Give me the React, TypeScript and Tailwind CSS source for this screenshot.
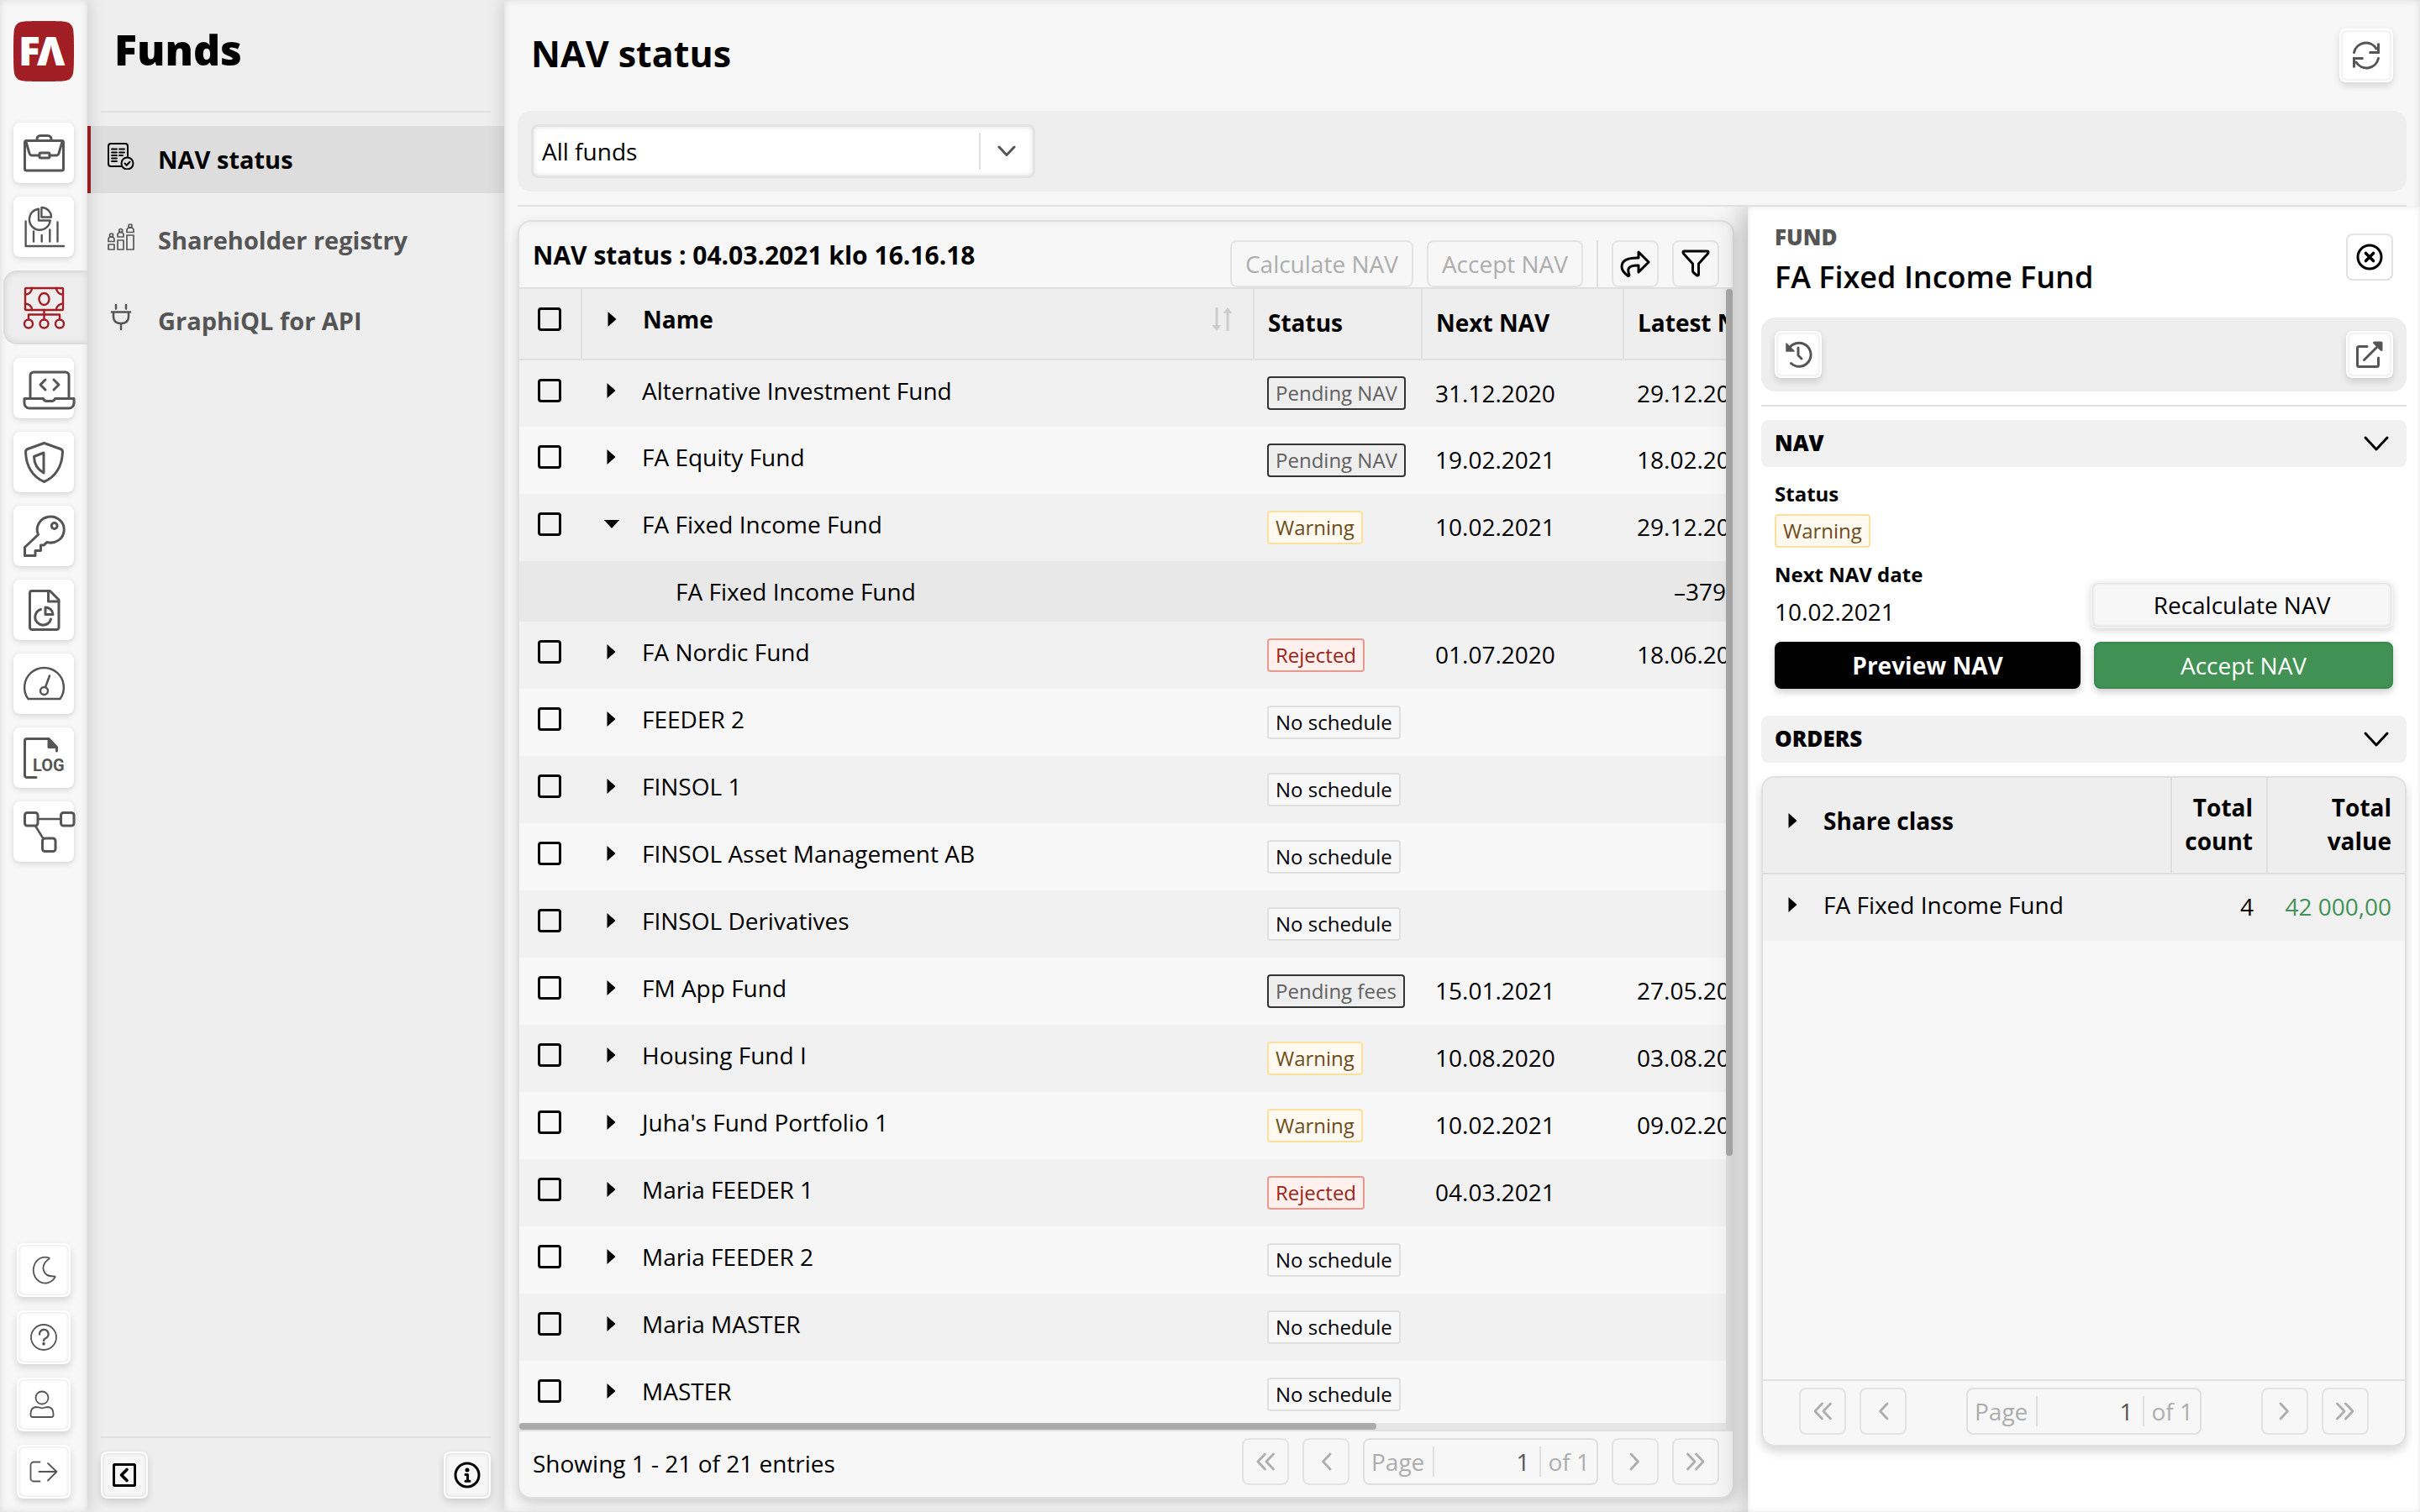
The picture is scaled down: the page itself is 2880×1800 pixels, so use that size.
import type { ReactNode } from "react";

const line = {
  fill: "none",
  stroke: "currentColor",
  strokeWidth: 3,
  strokeLinecap: "round",
  strokeLinejoin: "round",
} as const;

function Glyph({ box, className, width = 3, children }: { box: string; className: string; width?: number; children: ReactNode }) {
  return (
    <svg viewBox={box} className={className} {...line} strokeWidth={width} aria-hidden="true">
      {children}
    </svg>
  );
}

const modules: { label: string; icon: ReactNode; active?: boolean }[] = [
  {
    label: "Portfolios",
    icon: (
      <>
        <rect x="13.5" y="21.5" width="46" height="35.5" rx="2" />
        <path d="M28 21v-1.500a4 4 0 0 1 4-4h9a4 4 0 0 1 4 4V21M15 23l4 13.500q1 2.500 3 2.500h8.500M58 23l-4 13.500q-1 2.500-3 2.500H43" />
        <rect x="31" y="36" width="12" height="6" rx="1.500" />
      </>
    ),
  },
  {
    label: "Analytics",
    icon: (
      <g strokeWidth="2.400">
        <path d="M14.600 29.500v29.500H60M24 41.500v12M33.700 46v7.500M43.300 39.500v14M52.500 30.500v23" />
        <path d="M30 14.800A12.500 12.500 0 1 0 43.800 28.500H30Z" />
        <path d="M33.400 13v11.500H45A11.500 11.500 0 0 0 33.400 13Z" />
      </g>
    ),
  },
  {
    label: "Funds",
    active: true,
    icon: (
      <g strokeWidth="2.400">
        <rect x="14" y="13" width="45" height="26" rx="1" />
        <ellipse cx="36.500" cy="26" rx="6" ry="7" />
        <path d="M22 13a8 7.500 0 0 1-8 7.500M51 13a8 7.500 0 0 0 8 7.500M22 39a8 7.500 0 0 0-8-7.500M51 39a8 7.500 0 0 1 8-7.500" />
        <path d="M36.500 39v11M18 49v-4.500h37V49" />
        <circle cx="18" cy="55.500" r="5" />
        <circle cx="36.500" cy="55.500" r="5" />
        <circle cx="55" cy="55.500" r="5" />
      </g>
    ),
  },
  {
    label: "Developer",
    icon: (
      <>
        <path d="M20 47V21a4 4 0 0 1 4-4h38a4 4 0 0 1 4 4v26" />
        <path d="M13 48.500h22.500q1 3 4 3h6q3 0 4-3H72V54a6 6 0 0 1-6 6H19a6 6 0 0 1-6-6Z" />
        <path d="M38 26l-6 6 6 6M48 26l6 6-6 6" />
      </>
    ),
  },
  {
    label: "Compliance",
    icon: (
      <>
        <path d="M36.500 13.500 56 20.500q2.500 1 2.500 3.500C58 41 50 54 36.500 59.500 23 54 15 41 14.500 24q0-2.500 2.500-3.500Z" />
        <path d="M36 25v24C29 45 24.500 38 24.500 29.500Z" />
      </>
    ),
  },
  {
    label: "Access",
    icon: (
      <>
        <path d="M29.500 34.500 13.500 49.500V59.500H26V53.500H32.500V47H36L40 43.500A16 15.500 0 1 0 29.500 34.500Z" />
        <circle cx="48.700" cy="24" r="3.400" />
      </>
    ),
  },
  {
    label: "Reports",
    icon: (
      <>
        <path d="M22 13.500h21.500L54 24v33a2.500 2.500 0 0 1-2.500 2.500H22a2.500 2.500 0 0 1-2.500-2.500V16a2.500 2.500 0 0 1 2.500-2.500Z" />
        <path d="M41.500 13.500V26H54" />
        <path d="M32.500 35.500A9.500 9.500 0 1 0 44.500 47" />
        <path d="M38 33v8.500h9A9 9 0 0 0 38 33Z" />
      </>
    ),
  },
  {
    label: "Dashboard",
    icon: (
      <g strokeWidth="2.500">
        <path d="M17.500 54a23.400 23.400 0 1 1 38 0Z" />
        <circle cx="36.500" cy="44.500" r="4.500" />
        <path d="M38 40l5-13.500" />
      </g>
    ),
  },
  {
    label: "Log",
    icon: (
      <>
        <path d="M27 59.500H16a2.500 2.500 0 0 1-2.500-2.500V16a2.500 2.500 0 0 1 2.500-2.500h26L51.500 23.500V28" />
        <path d="M42 14v9.500h9Z" fill="currentColor" />
        <text x="23" y="52" fontFamily="Roboto" fontSize="20" fontWeight="700" fill="currentColor" stroke="none">
          LOG
        </text>
      </>
    ),
  },
  {
    label: "Workflows",
    icon: (
      <>
        <rect x="13.500" y="13.500" width="15.500" height="15.500" rx="3" />
        <rect x="56.500" y="13.500" width="15.500" height="15.500" rx="3" />
        <rect x="34.500" y="44" width="15.500" height="15.500" rx="3" />
        <path d="M29 21h27.500M26 29l9.500 15.500" strokeWidth="2.500" />
      </>
    ),
  },
];

const userTools: { label: string; icon: ReactNode }[] = [
  { label: "Dark mode", icon: <path d="M38.500 17.500A14 15.500 0 1 0 45.500 40.500Q46 39.500 44.500 39.500C31 40 26.500 27 38.500 18.500Q39 17.700 38.500 17.500Z" /> },
  {
    label: "Help",
    icon: (
      <>
        <circle cx="32" cy="32" r="15" />
        <path d="M27 28.500a5.300 5.300 0 1 1 7.500 4.500q-2.500 1.200-2.500 3" strokeWidth="2.400" />
        <path d="M32 39.500v.4" strokeWidth="3.500" />
      </>
    ),
  },
  {
    label: "Profile",
    icon: (
      <>
        <circle cx="30" cy="24" r="7.500" />
        <path d="M22.500 35q3 0 7.500 1.500Q34.500 35 37.500 35q6 1 6 8v1.500q0 2.500-2.500 2.500H19q-2.500 0-2.500-2.500V43q0-7 6-8Z" />
      </>
    ),
  },
  { label: "Log out", icon: <path d="M27.500 20.500H20A3.500 3.500 0 0 0 16.500 24V40A3.500 3.500 0 0 0 20 43.500H27.500M26.500 32H47M37 22L47.500 32 37 42.500" /> },
];

const views: { label: string; icon: ReactNode; active?: boolean }[] = [
  {
    label: "NAV status",
    active: true,
    icon: (
      <>
        <path d="M17 28H4a3 3 0 0 1-3-3V4a3 3 0 0 1 3-3h17a3 3 0 0 1 3 3v12" />
        <path d="M5 7.500h6M14 7.500h6M5 11.500h6M14 11.500h6M5 15h6M14 15h4M5 18.500h6M5 22h6" strokeWidth="1.800" />
        <circle cx="23.500" cy="24.500" r="7" />
        <path d="M20.500 24.500l2.200 2.200 3.800-4" />
      </>
    ),
  },
  {
    label: "Shareholder registry",
    icon: (
      <g strokeWidth="1.700">
        <rect x="1" y="25" width="7" height="6" />
        <rect x="12" y="20" width="7" height="11" />
        <rect x="23" y="14" width="8" height="17" />
        <circle cx="4.500" cy="14" r="2" />
        <circle cx="15.700" cy="8.500" r="2" />
        <circle cx="27" cy="3" r="2" />
        <path d="M1 21.500v-2.500q0-3 3.500-3t3.500 3v2.500ZM12 16v-2.500q0-3 3.500-3t3.500 3V16ZM23 10.500V8q0-3 4-3t4 3v2.500Z" />
      </g>
    ),
  },
  {
    label: "GraphiQL for API",
    icon: (
      <g strokeWidth="2.500">
        <path d="M10 1v4.500M22 1v4.500M5 9.500h22M7 10v5q0 8 9 8t9-8v-5M16 23v7" />
      </g>
    ),
  },
];

type Status = "Pending NAV" | "Pending fees" | "Warning" | "Rejected" | "No schedule";

interface Fund {
  name: string;
  status?: Status;
  next?: string;
  latest?: string;
  open?: boolean;
  child?: boolean;
  shaded?: boolean;
}

const funds: Fund[] = [
  { name: "Alternative Investment Fund", status: "Pending NAV", next: "31.12.2020", latest: "29.12.2020", shaded: true },
  { name: "FA Equity Fund", status: "Pending NAV", next: "19.02.2021", latest: "18.02.2021" },
  { name: "FA Fixed Income Fund", status: "Warning", next: "10.02.2021", latest: "29.12.2020", open: true, shaded: true },
  { name: "FA Fixed Income Fund", latest: "–379", child: true },
  { name: "FA Nordic Fund", status: "Rejected", next: "01.07.2020", latest: "18.06.2020", shaded: true },
  { name: "FEEDER 2", status: "No schedule" },
  { name: "FINSOL 1", status: "No schedule", shaded: true },
  { name: "FINSOL Asset Management AB", status: "No schedule" },
  { name: "FINSOL Derivatives", status: "No schedule", shaded: true },
  { name: "FM App Fund", status: "Pending fees", next: "15.01.2021", latest: "27.05.2020" },
  { name: "Housing Fund I", status: "Warning", next: "10.08.2020", latest: "03.08.2020", shaded: true },
  { name: "Juha's Fund Portfolio 1", status: "Warning", next: "10.02.2021", latest: "09.02.2021" },
  { name: "Maria FEEDER 1", status: "Rejected", next: "04.03.2021", shaded: true },
  { name: "Maria FEEDER 2", status: "No schedule" },
  { name: "Maria MASTER", status: "No schedule", shaded: true },
  { name: "MASTER", status: "No schedule" },
];

const badgeTone: Record<Status, string> = {
  "Pending NAV": "border-[#333333] bg-[#eeeeee] text-[#606060]",
  "Pending fees": "border-[#333333] bg-[#eeeeee] text-[#606060]",
  Warning: "border-[#fbdf9f] bg-[#fff9f0] text-[#6b4d1a]",
  Rejected: "border-[#e89a8e] bg-[#ffefed] text-[#982416]",
  "No schedule": "border-[#e0e0e0] bg-[#f7f7f7] text-black",
};

function Badge({ status }: { status: Status }) {
  return (
    <span className={`inline-flex h-10 items-center rounded border-2 px-2 align-middle text-[24px] whitespace-nowrap ${badgeTone[status]}`}>
      {status}
    </span>
  );
}

function Check({ label }: { label: string }) {
  return <input type="checkbox" aria-label={label} className="block size-7 appearance-none rounded border-3 border-black" />;
}

function Expander({ label, open = false }: { label: string; open?: boolean }) {
  return (
    <button type="button" aria-label={label} aria-expanded={open} className="size-5 shrink-0">
      <svg viewBox="0 0 20 20" className="size-5" aria-hidden="true">
        <path d={open ? "M1 5H19L10 15Z" : "M4.500 1V19L14.500 10Z"} fill="black" />
      </svg>
    </button>
  );
}

function RaisedButton({ label, className, children }: { label: string; className: string; children: ReactNode }) {
  return (
    <button
      type="button"
      aria-label={label}
      className={`flex shrink-0 items-center justify-center rounded-lg border-2 border-white shadow-[0_4px_8px_rgba(0,0,0,0.14),inset_0_0_4px_rgba(0,0,0,0.14)] ${className}`}
    >
      {children}
    </button>
  );
}

function OutlineButton({ label, className = "", children }: { label: string; className?: string; children: ReactNode }) {
  return (
    <button
      type="button"
      aria-label={label}
      className={`flex size-14 shrink-0 items-center justify-center rounded-lg border-2 border-[#e3e3e3] ${className}`}
    >
      {children}
    </button>
  );
}

const steps = {
  first: "M14.500 5 6 14l8.500 9M24.500 5 16 14l8.500 9",
  previous: "M20 5 11.500 14 20 23",
  next: "M10 5l8.500 9L10 23",
  last: "M5.500 5 14 14l-8.500 9M15.500 5 24 14l-8.500 9",
};

function StepButton({ label, d }: { label: string; d: string }) {
  return (
    <OutlineButton label={label} className="text-[#adadad]">
      <Glyph box="0 0 30 28" className="h-7 w-[30px]" width={2.8}>
        <path d={d} />
      </Glyph>
    </OutlineButton>
  );
}

function PageBox({ id }: { id: string }) {
  return (
    <div className="flex h-14 w-[280px] items-center rounded-lg border-2 border-[#e0e0e0] text-[#adadad]">
      <label htmlFor={id} className="pr-2.5 pl-2">
        Page
      </label>
      <input id={id} defaultValue="1" className="h-9 w-0 grow border-x-2 border-[#e0e0e0] bg-transparent px-3 text-right text-[#555555] outline-none" />
      <span className="px-2 whitespace-nowrap">of 1</span>
    </div>
  );
}

function Rail() {
  return (
    <nav aria-label="Modules" className="relative z-10 flex w-[104px] shrink-0 flex-col items-center bg-[#f7f7f7] pb-4 shadow-[0_0_20px_rgba(0,0,0,0.16),inset_0_0_8px_rgba(0,0,0,0.12)]">
      <svg viewBox="0 0 72 72" className="mt-[25px] size-18 shrink-0" role="img" aria-label="FA">
        <path d="M36 0C62 0 65 .5 68.500 4.500 71.500 8 72 12 72 36s-.5 28-3.500 31.500C65 71.500 62 72 36 72S7 71.500 3.500 67.500C.5 64 0 60 0 36S.5 8 3.500 4.500C7 .5 10 0 36 0Z" fill="#a01e24" />
        <text x="6" y="53" fontFamily="Open Sans" fontSize="48" fontWeight="800" fill="white">
          F
        </text>
        <text x="28" y="53" fontFamily="Open Sans" fontSize="48" fontWeight="800" fill="white">
          Λ
        </text>
      </svg>
      <ul className="mt-[49px] flex w-full flex-col gap-4">
        {modules.map((m) =>
          m.active ? (
            <li key={m.label} className="pl-1">
              <button
                type="button"
                aria-label={m.label}
                aria-current="page"
                className="flex h-22 w-full items-center rounded-l-2xl border-2 border-r-0 border-[#dcdcdc] bg-[#eeeeee] pl-2.5 text-[#a01e24] shadow-[inset_0_0_8px_rgba(0,0,0,0.1)]"
              >
                <Glyph box="0 0 72 72" className="size-18 overflow-visible">
                  {m.icon}
                </Glyph>
              </button>
            </li>
          ) : (
            <li key={m.label} className="px-4">
              <button type="button" aria-label={m.label} className="block size-18 rounded-lg bg-white text-[#555555] shadow-[0_2px_6px_rgba(0,0,0,0.15)]">
                <Glyph box="0 0 72 72" className="size-18 overflow-visible">
                  {m.icon}
                </Glyph>
              </button>
            </li>
          ),
        )}
      </ul>
      <div className="mt-auto flex flex-col gap-4">
        {userTools.map((t) => (
          <RaisedButton key={t.label} label={t.label} className="size-16 bg-white text-[#555555]">
            <Glyph box="0 0 64 64" className="size-16 shrink-0" width={1.8}>
              {t.icon}
            </Glyph>
          </RaisedButton>
        ))}
      </div>
    </nav>
  );
}

function Sidebar() {
  return (
    <aside className="flex w-[496px] shrink-0 flex-col bg-[#eeeeee]">
      <div className="mx-4 flex h-[134px] items-center border-b-2 border-[#e0e0e0] pb-3.5 pl-4">
        <h1 className="text-[50px] font-extrabold">Funds</h1>
      </div>
      <ul className="mt-4 flex flex-col gap-4">
        {views.map((v) => (
          <li key={v.label}>
            <a
              href="#"
              aria-current={v.active ? "page" : undefined}
              className={`flex h-20 items-center gap-7 border-l-4 pl-5 text-[29px] font-bold ${v.active ? "border-[#a01e24] bg-[#dddddd] text-black" : "border-transparent text-[#555555]"}`}
            >
              <Glyph box="0 0 32 32" className="mb-2 size-8" width={2}>
                {v.icon}
              </Glyph>
              {v.label}
            </a>
          </li>
        ))}
      </ul>
      <div className="mx-4 mt-auto flex justify-between border-t-2 border-[#e0e0e0] py-4">
        <RaisedButton label="Collapse menu" className="size-14 border-[#f7f7f7] bg-[#f7f7f7]">
          <Glyph box="0 0 56 56" className="size-14 shrink-0">
            <rect x="15.500" y="15.500" width="25" height="25" rx="1" />
            <path d="M31 21.500 24.500 28l6.500 6.500" strokeWidth="3.600" />
          </Glyph>
        </RaisedButton>
        <RaisedButton label="Information" className="size-14 border-[#f7f7f7] bg-[#f7f7f7]">
          <Glyph box="0 0 56 56" className="size-14 shrink-0">
            <circle cx="28" cy="28" r="14" />
            <path d="M28 22v.1" strokeWidth="5" />
            <path d="M26 27.500h2.500V35M26 35.200h5" strokeWidth="3" />
          </Glyph>
        </RaisedButton>
      </div>
    </aside>
  );
}

function FundTable() {
  return (
    <table className="w-[2034px] shrink-0 table-fixed self-start text-left">
      <colgroup>
        <col className="w-[74px]" />
        <col className="w-[800px]" />
        <col className="w-[200px]" />
        <col className="w-[240px]" />
        <col />
      </colgroup>
      <thead>
        <tr className="h-[84px] border-b-2 border-[#e0e0e0] bg-[#eeeeee]">
          <th className="border-r-2 border-[#e0e0e0] pb-3 pl-[22px]">
            <Check label="Select all funds" />
          </th>
          <th className="border-r-2 border-[#e0e0e0] pr-6 pb-3 pl-[26px]">
            <div className="flex items-center">
              <Expander label="Expand all" />
              <span className="ml-[26px]">Name</span>
              <svg viewBox="0 0 24 28" className="ml-auto h-7 w-6 text-[#cccccc]" aria-hidden="true">
                <path d="M5 0v24M18 4v24" stroke="currentColor" strokeWidth="3" />
                <path d="M-.5 21H10.500L5 28ZM12.500 7H23.500L18 0Z" fill="currentColor" />
              </svg>
            </div>
          </th>
          <th className="border-r-2 border-[#e0e0e0] pb-1 pl-4">Status</th>
          <th className="border-r-2 border-[#e0e0e0] pb-1 pl-4">Next NAV</th>
          <th className="pb-1 pl-4">Latest NAV</th>
        </tr>
      </thead>
      <tbody>
        {funds.map((f, i) =>
          f.child ? (
            <tr key={i} className="h-18 bg-[#e8e8e8]">
              <td />
              <td className="pl-[112px]">{f.name}</td>
              <td />
              <td />
              <td className="pl-15">{f.latest}</td>
            </tr>
          ) : (
            <tr key={i} className={`h-20 ${f.shaded ? "bg-[#f1f1f1]" : "bg-[#f7f7f7]"}`}>
              <td className="pb-2 pl-[22px]">
                <Check label={`Select ${f.name}`} />
              </td>
              <td className="pb-2 pl-[26px]">
                <div className="flex items-center">
                  <Expander label={`Toggle ${f.name}`} open={f.open} />
                  <span className="ml-[26px]">{f.name}</span>
                </div>
              </td>
              <td className="pb-1 pl-4">{f.status && <Badge status={f.status} />}</td>
              <td className="pb-0.5 pl-4">{f.next}</td>
              <td className="pb-0.5 pl-4">{f.latest}</td>
            </tr>
          ),
        )}
      </tbody>
    </table>
  );
}

function FundCard() {
  return (
    <section className="flex min-w-0 grow flex-col overflow-hidden rounded-2xl border-2 border-[#e0e0e0] bg-[#f7f7f7] shadow-[0_6px_14px_rgba(0,0,0,0.16)]">
      <div className="flex h-20 shrink-0 items-end gap-4 border-b-2 border-[#e0e0e0] px-4 shadow-[inset_0_4px_6px_rgba(0,0,0,0.03)]">
        <h3 className="mr-auto self-start pt-4 text-[30px] leading-12 font-bold">NAV status : 04.03.2021 klo 16.16.18</h3>
        <button type="button" disabled className="h-14 rounded-lg border-2 border-[#e3e3e3] px-4 text-[#adadad]">
          Calculate NAV
        </button>
        <button type="button" disabled className="h-14 rounded-lg border-2 border-[#e3e3e3] px-4 text-[#adadad]">
          Accept NAV
        </button>
        <span className="h-14 w-0.5 bg-[#e0e0e0]" />
        <OutlineButton label="Export">
          <Glyph box="0 0 36 34" className="h-[34px] w-9">
            <path d="M22 3l12 12-12 12v-8q-10-.5-12 4-.8 3 1 7.500-.5 1.500-1.500 1Q2 26 2 20.500 2 9.500 22 10Z" />
          </Glyph>
        </OutlineButton>
        <OutlineButton label="Filter">
          <Glyph box="0 0 34 34" className="size-[34px]">
            <path d="M3.500 2h27q1.500 0 1.500 1.500 0 .8-.6 1.400L20.500 17v12.500q0 1.500-1.300 1.500-.6 0-1.200-.5l-3.500-3q-1-.8-1-2V17L2.600 4.900Q2 4.300 2 3.500 2 2 3.500 2Z" />
          </Glyph>
        </OutlineButton>
      </div>
      <div className="flex min-h-0 grow">
        <div className="flex min-w-0 grow flex-col">
          <div className="flex min-h-0 min-w-0 grow overflow-hidden">
            <FundTable />
          </div>
          <div className="h-2 shrink-0 bg-[#e6e6e6]">
            <div className="h-full w-[71%] rounded-full bg-[#aaaaaa]" />
          </div>
        </div>
        <div className="w-2 shrink-0 bg-[#e0e0e0]">
          <div className="h-[76%] rounded-full bg-[#aaaaaa]" />
        </div>
      </div>
      <div className="flex shrink-0 items-center gap-4 border-t-2 border-[#e0e0e0] px-4 pt-2 pb-3.5">
        <span className="mr-auto pt-1">Showing 1 - 21 of 21 entries</span>
        <StepButton label="First page" d={steps.first} />
        <StepButton label="Previous page" d={steps.previous} />
        <PageBox id="fund-page" />
        <StepButton label="Next page" d={steps.next} />
        <StepButton label="Last page" d={steps.last} />
      </div>
    </section>
  );
}

function SectionBar({ title }: { title: string }) {
  return (
    <h4 className="shrink-0">
      <button type="button" aria-expanded="true" className="flex h-14 w-full items-center justify-between rounded-lg bg-[#f1f1f1] pr-5 pl-4">
        <span className="pb-0.5 text-[26px] font-extrabold">{title}</span>
        <Glyph box="0 0 32 20" className="h-5 w-8">
          <path d="M3 3l13 14L29 3" />
        </Glyph>
      </button>
    </h4>
  );
}

function Orders() {
  return (
    <section className="mt-4 mb-[78px] flex min-h-0 grow flex-col overflow-hidden rounded-2xl border-2 border-[#e0e0e0] bg-[#f7f7f7] shadow-[0_6px_12px_rgba(0,0,0,0.16)]">
      <table className="w-full table-fixed">
        <colgroup>
          <col />
          <col className="w-[114px]" />
          <col className="w-[164px]" />
        </colgroup>
        <thead>
          <tr className="h-[114px] border-b-2 border-[#e0e0e0] bg-[#eeeeee] leading-10">
            <th className="border-r-2 border-[#e0e0e0] pb-3 pl-[26px] text-left">
              <div className="flex items-center">
                <Expander label="Expand all" />
                <span className="ml-[26px]">Share class</span>
              </div>
            </th>
            <th className="border-r-2 border-[#e0e0e0] pr-4 pb-1 text-right">
              Total
              <br />
              count
            </th>
            <th className="pr-4 pb-1 text-right">
              Total
              <br />
              value
            </th>
          </tr>
        </thead>
        <tbody>
          <tr className="h-20 bg-[#f1f1f1]">
            <td className="pb-2 pl-[26px]">
              <div className="flex items-center">
                <Expander label="Toggle FA Fixed Income Fund" />
                <span className="ml-[26px]">FA Fixed Income Fund</span>
              </div>
            </td>
            <td className="pr-4 pb-1 text-right">4</td>
            <td className="pr-4 pb-1 text-right text-[#429256]">42 000,00</td>
          </tr>
        </tbody>
      </table>
      <div className="mt-auto flex shrink-0 items-center justify-around border-t-2 border-[#e0e0e0] px-2 pt-2 pb-3">
        <div className="flex gap-4">
          <StepButton label="First page" d={steps.first} />
          <StepButton label="Previous page" d={steps.previous} />
        </div>
        <PageBox id="order-page" />
        <div className="flex gap-4">
          <StepButton label="Next page" d={steps.next} />
          <StepButton label="Last page" d={steps.last} />
        </div>
      </div>
    </section>
  );
}

function Detail() {
  return (
    <aside className="relative z-10 flex w-[800px] shrink-0 flex-col bg-white px-4 shadow-[0_0_36px_rgba(0,0,0,0.36),inset_0_0_6px_rgba(0,0,0,0.1)]">
      <header className="flex h-[132px] shrink-0 justify-between px-4 pt-4">
        <div>
          <p className="text-[26px] leading-10 font-extrabold text-[#555555]">FUND</p>
          <h3 className="mt-1 text-[36px] leading-12 font-semibold">FA Fixed Income Fund</h3>
        </div>
        <OutlineButton label="Close" className="mt-4">
          <Glyph box="0 0 56 56" className="size-14 shrink-0">
            <circle cx="28" cy="28" r="14" />
            <path d="M23.500 23.500l9 9M32.500 23.500l-9 9" strokeWidth="3.600" />
          </Glyph>
        </OutlineButton>
      </header>
      <div className="flex shrink-0 justify-between rounded-2xl bg-[#eeeeee] p-4">
        <RaisedButton label="History" className="size-14 bg-white text-[#555555]">
          <Glyph box="0 0 56 56" className="size-14 shrink-0">
            <path d="M16.500 22A14 14 0 1 1 19.500 38.500M28 20v9l4 4" />
            <path d="M14 15v9h9Z" fill="currentColor" strokeWidth="1.500" />
          </Glyph>
        </RaisedButton>
        <RaisedButton label="Open in new window" className="size-14 bg-white text-[#555555]">
          <Glyph box="0 0 56 56" className="size-14 shrink-0">
            <path d="M25 18.500H15.500q-2 0-2 2V40.500q0 2 2 2H36.500q2 0 2-2V32M21.500 34.500 40 16" />
            <path d="M33.500 14H42v8.500Z" fill="currentColor" />
          </Glyph>
        </RaisedButton>
      </div>
      <hr className="mt-4 mb-4 border-t-2 border-[#e0e0e0]" />
      <SectionBar title="NAV" />
      <div className="flex shrink-0 flex-col px-4 pt-4 pb-8">
        <div className="flex items-end justify-between">
          <dl>
            <dt className="text-[24px] leading-8 font-bold">Status</dt>
            <dd className="mt-2 flex">
              <Badge status="Warning" />
            </dd>
            <dt className="mt-4 text-[24px] leading-8 font-bold">Next NAV date</dt>
            <dd className="mt-2 leading-10">10.02.2021</dd>
          </dl>
          <button
            type="button"
            className="h-14 w-[360px] rounded-lg border-2 border-[#f2f2f2] bg-[#f7f7f7] shadow-[0_3px_8px_rgba(0,0,0,0.16),inset_0_0_4px_rgba(0,0,0,0.16)]"
          >
            Recalculate NAV
          </button>
        </div>
        <div className="mt-4 grid grid-cols-[1fr_356px] gap-4">
          <button type="button" className="h-14 rounded-lg bg-black font-bold text-white shadow-[0_4px_8px_rgba(0,0,0,0.2)]">
            Preview NAV
          </button>
          <button type="button" className="h-14 rounded-lg bg-[#429256] text-white shadow-[0_4px_8px_rgba(0,0,0,0.2),inset_0_0_4px_rgba(0,0,0,0.2)]">
            Accept NAV
          </button>
        </div>
      </div>
      <SectionBar title="ORDERS" />
      <Orders />
    </aside>
  );
}

export default function App() {
  return (
    <div className="flex h-screen overflow-hidden bg-[#eeeeee] font-['Open_Sans',sans-serif] text-[28px] leading-10 text-black">
      <Rail />
      <Sidebar />
      <main className="relative z-10 flex min-w-0 grow flex-col bg-[#f7f7f7] shadow-[0_0_20px_rgba(0,0,0,0.16),inset_0_0_10px_rgba(0,0,0,0.12)]">
        <header className="flex h-[132px] shrink-0 items-center justify-between px-8">
          <h2 className="pb-1.5 text-[43px] leading-none font-bold">NAV status</h2>
          <RaisedButton label="Refresh" className="size-16 bg-white text-[#555555]">
            <Glyph box="0 0 64 64" className="size-16 shrink-0">
              <path d="M17.500 28.500A14.500 14.500 0 0 1 44 24M46.500 35.500A14.500 14.500 0 0 1 20 40" />
              <path d="M46.500 17.500v11h-11M17.500 46.500v-11h11" strokeLinecap="butt" strokeLinejoin="miter" />
            </Glyph>
          </RaisedButton>
        </header>
        <div className="mx-4 flex shrink-0 rounded-2xl bg-[#eeeeee] p-4">
          <div className="relative flex h-16 w-[600px] items-center rounded-lg border-3 border-[#e3e3e3] bg-white shadow-[inset_0_0_6px_rgba(0,0,0,0.12)]">
            <select aria-label="Fund filter" defaultValue="All funds" className="h-full w-full appearance-none bg-transparent pl-2.5 outline-none">
              <option>All funds</option>
            </select>
            <span className="pointer-events-none absolute inset-y-[7px] right-0 flex w-16 items-center justify-center border-l-2 border-[#e0e0e0] text-[#555555]">
              <Glyph box="0 0 22 14" className="h-3.5 w-[22px]">
                <path d="M2 2l9 9.500L20 2" />
              </Glyph>
            </span>
          </div>
        </div>
        <hr className="mx-4 mt-4 shrink-0 border-t-2 border-[#e0e0e0]" />
        <div className="flex min-h-0 grow overflow-hidden">
          <div className="flex min-w-0 grow p-4">
            <FundCard />
          </div>
          <Detail />
        </div>
      </main>
    </div>
  );
}
